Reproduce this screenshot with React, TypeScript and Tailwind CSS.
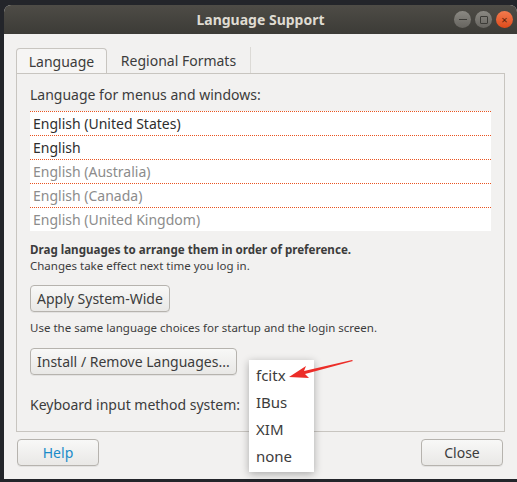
import { ReactNode } from "react";

const languages = [
  { name: "English (United States)", active: true },
  { name: "English", active: true },
  { name: "English (Australia)", active: false },
  { name: "English (Canada)", active: false },
  { name: "English (United Kingdom)", active: false },
];

const methods = ["fcitx", "IBus", "XIM", "none"];

function GtkButton({
  children,
  className = "",
  color = "text-[#3c3c3c]",
}: {
  children: ReactNode;
  className?: string;
  color?: string;
}) {
  return (
    <button
      className={`h-[27px] rounded-[4px] border border-[#b6b3ae] bg-gradient-to-b from-[#f8f8f7] to-[#e9e8e6] px-[6px] text-[14px] shadow-[0_1px_0_rgba(0,0,0,0.06)] ${color} ${className}`}
    >
      {children}
    </button>
  );
}

export default function App() {
  return (
    <div
      className="relative h-[482px] w-[517px] overflow-hidden bg-[#23252a] pl-[4px] pt-[5px]"
      style={{ fontFamily: '"Noto Sans", "Open Sans", sans-serif' }}
    >
      <div className="flex h-[474px] w-[513px] flex-col overflow-hidden rounded-t-[7px] bg-[#f2f1f0]">
        {/* title bar */}
        <div className="relative flex h-[29px] shrink-0 items-center justify-center bg-gradient-to-b from-[#4e4c46] to-[#3c3b37]">
          <span className="text-[14px] font-bold text-[#dfdbd2]">Language Support</span>
          <div className="absolute right-[4px] top-[6px] flex gap-[4px]">
            <span className="flex h-[17px] w-[17px] items-center justify-center rounded-full bg-gradient-to-b from-[#8b8983] to-[#66645f]">
              <span className="h-[1.5px] w-[8px] bg-[#3c3b37]" />
            </span>
            <span className="flex h-[17px] w-[17px] items-center justify-center rounded-full bg-gradient-to-b from-[#8b8983] to-[#66645f]">
              <span className="h-[8px] w-[8px] rounded-[1px] border border-[#3c3b37]" />
            </span>
            <span className="flex h-[17px] w-[17px] items-center justify-center rounded-full bg-gradient-to-b from-[#f27a4d] to-[#de4a18] text-[11px] leading-none text-[#5a1f08]">
              ×
            </span>
          </div>
        </div>

        <div className="flex flex-1 flex-col px-[12px] pt-[13px]">
          {/* tabs */}
          <div className="flex h-[26px] items-end">
            <div className="-mb-px flex h-[26px] w-[91px] items-center justify-center rounded-t-[4px] border border-b-0 border-[#c8c5c0] bg-[#f6f5f4] text-[14px] text-[#3c3c3c]">
              Language
            </div>
            <div className="flex h-[26px] w-[144px] items-center justify-center border-r border-[#dcdad6] text-[14px] text-[#3c3c3c]">
              Regional Formats
            </div>
          </div>

          {/* panel */}
          <div className="h-[359px] w-[489px] border border-[#c8c5c0] px-[13px] pt-[12px]">
            <div className="text-[14px] leading-[18px] text-[#3c3c3c]">Language for menus and windows:</div>
            <div className="mt-[7px] w-[461px] bg-white">
              {languages.map((l, i) => (
                <div
                  key={l.name}
                  className={`flex h-[24px] items-center border-t border-dotted border-[#e95420] pl-[3px] text-[14px] ${
                    l.active ? "text-[#2e2e2e]" : "text-[#8c8c8c]"
                  } ${i === languages.length - 1 ? "h-[22px]" : ""}`}
                >
                  {l.name}
                </div>
              ))}
            </div>

            <div className="mt-[11px] text-[11.6px] font-bold leading-[16px] text-[#3c3c3c]">
              Drag languages to arrange them in order of preference.
            </div>
            <div className="text-[11.5px] leading-[16px] text-[#3c3c3c]">Changes take effect next time you log in.</div>

            <GtkButton className="mt-[11px]">Apply System-Wide</GtkButton>
            <div className="mt-[8px] text-[11.5px] leading-[16px] text-[#3c3c3c]">
              Use the same language choices for startup and the login screen.
            </div>

            <GtkButton className="mt-[12px]">Install / Remove Languages...</GtkButton>
            <div className="mt-[21px] text-[14px] leading-[18px] text-[#3c3c3c]">Keyboard input method system:</div>
          </div>

          {/* bottom buttons */}
          <div className="mt-[7px] flex justify-between pl-[1px] pr-[2px]">
            <GtkButton className="w-[82px]" color="text-[#1a8bc9]">
              Help
            </GtkButton>
            <GtkButton className="w-[82px]">Close</GtkButton>
          </div>
        </div>
      </div>

      {/* dropdown menu */}
      <div className="absolute left-[249px] top-[360px] flex w-[65px] flex-col bg-white py-[2px] shadow-[0_2px_8px_rgba(0,0,0,0.3)]">
        {methods.map((m) => (
          <div key={m} className="flex h-[27px] items-center pl-[7px] text-[15px] text-[#3c3c3c]">
            {m}
          </div>
        ))}
      </div>

      {/* red arrow */}
      <svg className="absolute left-[286px] top-[358px]" width="70" height="24" viewBox="0 0 70 24">
        <polygon points="66,2 18,13 20,8 3,19 23,20 19,16 67,3" fill="#ec2d28" />
      </svg>
    </div>
  );
}
